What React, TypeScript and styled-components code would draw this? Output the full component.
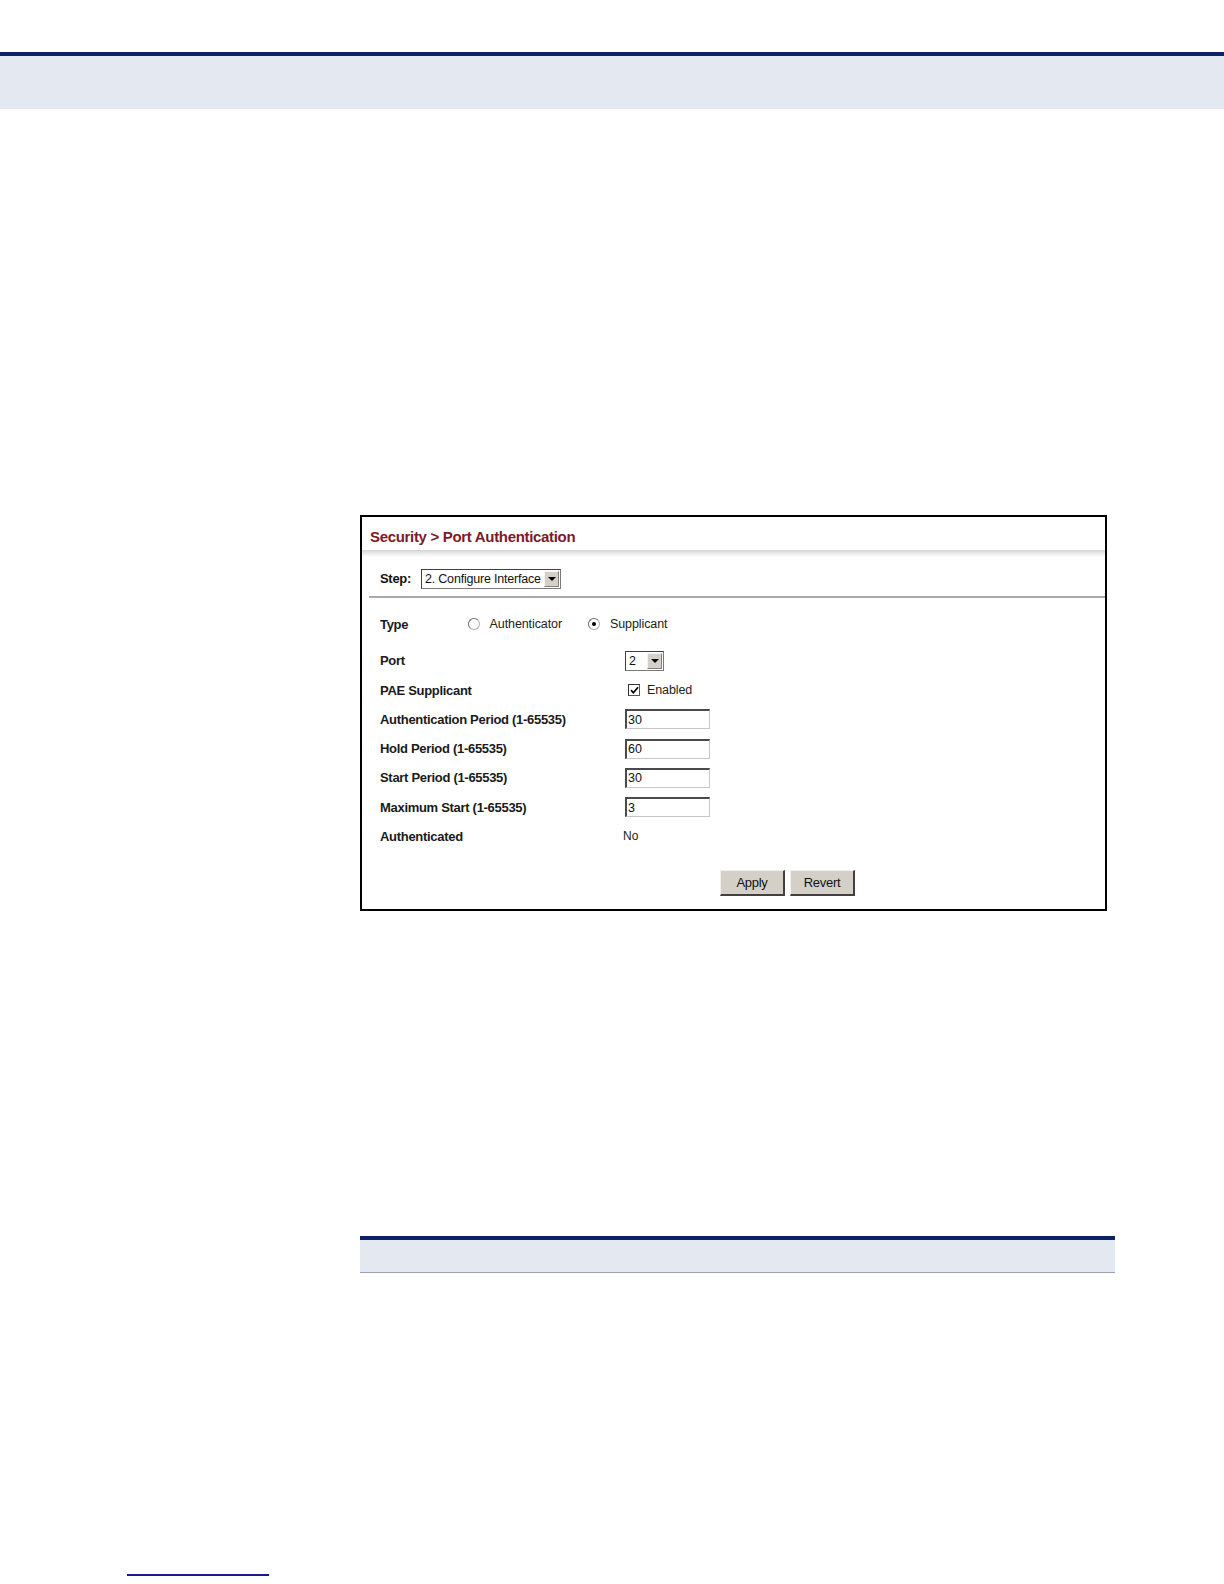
import React from "react";
import styled, { createGlobalStyle } from "styled-components";

const Global = createGlobalStyle`
  html, body { margin: 0; padding: 0; background: #ffffff; }
  body { font-family: "Liberation Sans", Arial, sans-serif; }
`;

const Page = styled.div`
  width: 1224px;
  height: 1584px;
  background: #ffffff;
  display: flex;
  flex-direction: column;
  overflow: hidden;
`;

const HeaderBand = styled.div`
  margin-top: 52px;
  height: 53px;
  border-top: 4px solid #0a2463;
  background: #e4e8f0;
`;

const Frame = styled.div`
  margin-top: 406px;
  margin-left: 360px;
  width: 747px;
  height: 396px;
  box-sizing: border-box;
  border: 2px solid #000;
  display: flex;
  flex-direction: column;
  font-family: "Liberation Sans", Arial, sans-serif;
`;

const TitleBar = styled.div`
  height: 33px;
  flex: none;
  box-sizing: border-box;
  display: flex;
  align-items: center;
  padding: 6px 0 0 8px;
  color: #7a1a2a;
  font-weight: bold;
  font-size: 15px;
  letter-spacing: -0.32px;
`;

const TitleShade = styled.div`
  height: 7px;
  flex: none;
  background: linear-gradient(to bottom, #d4d4d4, #ececec 50%, #ffffff);
`;

const StepRow = styled.div`
  height: 39px;
  flex: none;
  box-sizing: border-box;
  display: flex;
  align-items: center;
  padding: 4px 0 0 18px;
  font-size: 12.5px;
  color: #111;
`;

const StepLabel = styled.span`
  width: 41px;
  flex: none;
  font-weight: bold;
  font-size: 13px;
  letter-spacing: -0.3px;
`;

const Divider = styled.div`
  margin-left: 7px;
  height: 2px;
  flex: none;
  background: #a9a9a9;
`;

const Form = styled.div`
  display: flex;
  flex-direction: column;
  padding: 11.4px 0 0 18px;
  font-size: 12.5px;
  color: #111;
`;

const Row = styled.div<{ $after?: number }>`
  height: 29.25px;
  margin-bottom: ${(p) => p.$after ?? 0}px;
  display: flex;
  align-items: center;
`;

const Label = styled.div<{ $w?: number }>`
  width: ${(p) => p.$w ?? 245}px;
  flex: none;
  font-weight: bold;
  font-size: 13px;
  letter-spacing: -0.3px;
  color: #1a1a1a;
`;

const RadioGroup = styled.label<{ $w: number }>`
  width: ${(p) => p.$w}px;
  flex: none;
  display: flex;
  align-items: center;
  gap: 10px;
  color: #222;
  letter-spacing: -0.1px;
`;

const Radio = styled.span<{ $on?: boolean }>`
  width: 12px;
  height: 12px;
  box-sizing: border-box;
  border-radius: 50%;
  border: 1px solid #b0b0b0;
  border-top-color: #6a6a6a;
  border-left-color: #6a6a6a;
  background: #fff;
  display: flex;
  align-items: center;
  justify-content: center;
  &::after {
    content: "";
    width: 4px;
    height: 4px;
    border-radius: 50%;
    background: ${(p) => (p.$on ? "#000" : "transparent")};
  }
`;

const Select = styled.div<{ $w: number }>`
  width: ${(p) => p.$w}px;
  height: 20px;
  flex: none;
  box-sizing: border-box;
  border: 1px solid #7a7a7a;
  border-top-color: #404040;
  border-left-color: #404040;
  background: #fff;
  display: flex;
  align-items: center;
  justify-content: space-between;
  padding-left: 3px;
  color: #111;
  white-space: nowrap;
  letter-spacing: -0.2px;
  overflow: hidden;
`;

const Arrow = styled.span`
  width: 15px;
  height: 16px;
  flex: none;
  margin-right: 1px;
  box-sizing: border-box;
  background: #d4d0c8;
  border: 1px solid #808080;
  border-top-color: #f4f4f4;
  border-left-color: #f4f4f4;
  display: flex;
  align-items: center;
  justify-content: center;
  &::after {
    content: "";
    border-left: 4px solid transparent;
    border-right: 4px solid transparent;
    border-top: 4px solid #000;
    margin-top: 1px;
  }
`;

const CheckWrap = styled.div`
  display: flex;
  align-items: center;
  gap: 7px;
  margin-left: 3px;
  color: #222;
  letter-spacing: -0.1px;
`;

const Check = styled.span`
  width: 12px;
  height: 12px;
  box-sizing: border-box;
  border: 1px solid #555;
  border-top-color: #333;
  border-left-color: #333;
  background: #fff;
  display: flex;
  align-items: center;
  justify-content: center;
`;

const Input = styled.div`
  width: 85px;
  height: 20px;
  box-sizing: border-box;
  border: 1px solid #c8c8c8;
  border-top: 2px solid #4a4a4a;
  border-left: 2px solid #4a4a4a;
  background: #fff;
  display: flex;
  align-items: center;
  padding-left: 1px;
  color: #111;
`;

const Value = styled.span`
  margin-left: -2px;
  color: #222;
  font-size: 12px;
`;

const Buttons = styled.div`
  display: flex;
  gap: 5px;
  margin-top: 19px;
  margin-left: 340px;
`;

const Button = styled.div`
  width: 65px;
  height: 26px;
  box-sizing: border-box;
  background: #d4d0c8;
  border: 2px solid #404040;
  border-top: 1px solid #f0f0f0;
  border-left: 1px solid #f0f0f0;
  display: flex;
  align-items: center;
  justify-content: center;
  font-size: 13px;
  letter-spacing: -0.3px;
  color: #111;
`;

const TableHead = styled.div`
  margin-top: 325px;
  margin-left: 360px;
  width: 755px;
  height: 37px;
  box-sizing: border-box;
  border-top: 4px solid #0a2463;
  border-bottom: 1px solid #9aa3b5;
  background: #e4e8f0;
`;

const FootRule = styled.div`
  margin-top: 301px;
  margin-left: 127px;
  width: 142px;
  height: 2px;
  background: #1a1a8c;
`;

const fields = [
  { label: "Authentication Period (1-65535)", value: "30" },
  { label: "Hold Period (1-65535)", value: "60" },
  { label: "Start Period (1-65535)", value: "30" },
  { label: "Maximum Start (1-65535)", value: "3" },
];

export default function App() {
  return (
    <Page>
      <Global />
      <HeaderBand />
      <Frame>
        <TitleBar>Security &gt; Port Authentication</TitleBar>
        <TitleShade />
        <StepRow>
          <StepLabel>Step:</StepLabel>
          <Select $w={140}>
            2. Configure Interface
            <Arrow />
          </Select>
        </StepRow>
        <Divider />
        <Form>
          <Row $after={7.5}>
            <Label $w={87.6}>Type</Label>
            <RadioGroup $w={120.4}>
              <Radio />
              Authenticator
            </RadioGroup>
            <RadioGroup $w={110}>
              <Radio $on />
              Supplicant
            </RadioGroup>
          </Row>
          <Row>
            <Label>Port</Label>
            <Select $w={39}>
              2
              <Arrow />
            </Select>
          </Row>
          <Row>
            <Label>PAE Supplicant</Label>
            <CheckWrap>
              <Check>
                <svg width="9" height="9" viewBox="0 0 9 9">
                  <path d="M1 4.2 L3.4 6.8 L8 1.2" fill="none" stroke="#000" strokeWidth="1.7" />
                </svg>
              </Check>
              Enabled
            </CheckWrap>
          </Row>
          {fields.map((f) => (
            <Row key={f.label}>
              <Label>{f.label}</Label>
              <Input>{f.value}</Input>
            </Row>
          ))}
          <Row>
            <Label>Authenticated</Label>
            <Value>No</Value>
          </Row>
          <Buttons>
            <Button>Apply</Button>
            <Button>Revert</Button>
          </Buttons>
        </Form>
      </Frame>
      <TableHead />
      <FootRule />
    </Page>
  );
}
